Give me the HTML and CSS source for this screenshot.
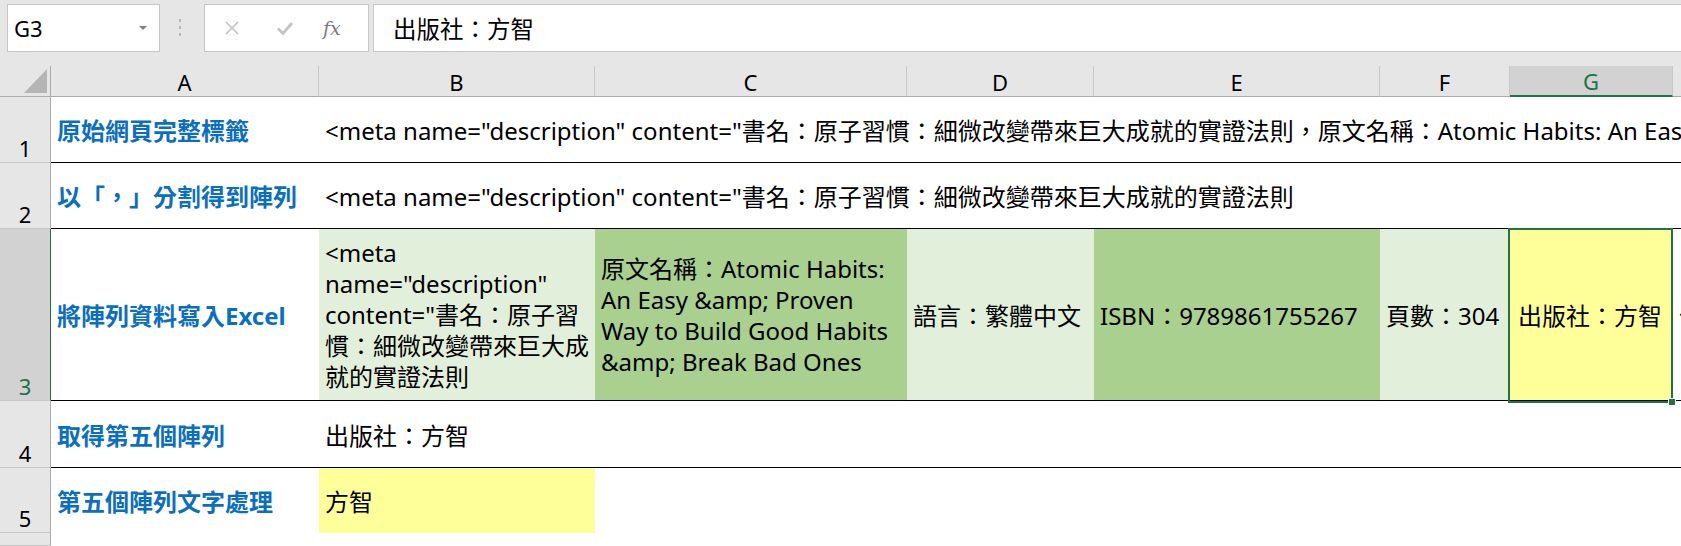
FILE: index.html
```html
<!DOCTYPE html>
<html lang="zh-Hant">
<head>
  <meta charset="UTF-8" />
  <title>Excel - 拆解 meta description</title>
  <link rel="stylesheet" href="styles.css">
</head>
<body>
  <div class="app">
    <div class="formula-bar">
      <div class="name-box">
        <span>G3</span>
        <span class="caret"></span>
      </div>
      <svg class="grip" width="6" height="20" viewBox="0 0 6 20">
        <rect x="2" y="1" width="2" height="3" fill="#b8b8b8"/>
        <rect x="2" y="8" width="2" height="3" fill="#b8b8b8"/>
        <rect x="2" y="15" width="2" height="3" fill="#b8b8b8"/>
      </svg>
      <div class="fx-buttons">
        <svg width="18" height="18" viewBox="0 0 18 18">
          <path d="M3 3 L15 15 M15 3 L3 15" stroke="#c4c4c4" stroke-width="1.6" fill="none"/>
        </svg>
        <svg width="20" height="18" viewBox="0 0 20 18">
          <path d="M3 9.5 L8 14.5 L17 4" stroke="#c4c4c4" stroke-width="2.8" fill="none"/>
        </svg>
        <span class="fx">fx</span>
      </div>
      <div class="formula-input">出版社：方智</div>
    </div>

    <div class="sheet">
      <!-- column headers -->
      <div class="corner">
        <svg width="50" height="30" viewBox="0 0 50 30">
          <polygon points="47,3 47,27 24,27" fill="#b5b5b5"/>
        </svg>
      </div>
      <div class="col-head">A</div>
      <div class="col-head">B</div>
      <div class="col-head">C</div>
      <div class="col-head">D</div>
      <div class="col-head">E</div>
      <div class="col-head">F</div>
      <div class="col-head active">G</div>
      <div class="col-head last"></div>

      <!-- row 1 -->
      <div class="row-head">1</div>
      <div class="cell label line">原始網頁完整標籤</div>
      <div class="cell spill line">&lt;meta name="description" content="書名：原子習慣：細微改變帶來巨大成就的實證法則，原文名稱：Atomic Habits: An Easy &amp;amp; Proven Way to Build Good Habits &amp;amp; Break Bad Ones</div>

      <!-- row 2 -->
      <div class="row-head">2</div>
      <div class="cell label line">以「，」分割得到陣列</div>
      <div class="cell spill line">&lt;meta name="description" content="書名：原子習慣：細微改變帶來巨大成就的實證法則</div>

      <!-- row 3 -->
      <div class="row-head active">3</div>
      <div class="cell label line">將陣列資料寫入Excel</div>
      <div class="cell wrap light line">&lt;meta<br>name="description"<br>content="書名：原子習<br>慣：細微改變帶來巨大成<br>就的實證法則</div>
      <div class="cell wrap dark line">原文名稱：Atomic Habits:<br>An Easy &amp;amp; Proven<br>Way to Build Good Habits<br>&amp;amp; Break Bad Ones</div>
      <div class="cell light line">語言：繁體中文</div>
      <div class="cell dark line">ISBN：9789861755267</div>
      <div class="cell light line">頁數：304</div>
      <div class="cell yellow line">出版社：方智</div>
      <div class="cell line">作者：詹姆斯‧克利爾</div>

      <!-- row 4 -->
      <div class="row-head">4</div>
      <div class="cell label line">取得第五個陣列</div>
      <div class="cell line">出版社：方智</div>
      <div class="cell fill line"></div>

      <!-- row 5 -->
      <div class="row-head">5</div>
      <div class="cell label">第五個陣列文字處理</div>
      <div class="cell yellow">方智</div>
      <div class="cell fill"></div>

      <!-- row 6 -->
      <div class="row-head"></div>
      <div class="cell fill-all"></div>

      <div class="selection"><span class="handle"></span></div>
    </div>
  </div>
</body>
</html>
```

FILE: styles.css
```css
body {
  margin: 0;
  background: #fff;
  font-family: "Noto Sans", "Noto Sans CJK TC", sans-serif;
  color: #000;
  overflow: hidden;
}
.app {
  width: 1681px;
  height: 546px;
  overflow: hidden;
}

/* formula bar */
.formula-bar {
  height: 66px;
  background: #e6e6e6;
  display: flex;
  align-items: flex-start;
  padding-top: 4px;
  box-sizing: border-box;
}
.name-box {
  margin-left: 7px;
  width: 153px;
  height: 48px;
  background: #fff;
  border: 1px solid #c6c6c6;
  box-sizing: border-box;
  display: flex;
  align-items: center;
  justify-content: space-between;
  padding: 0 12px 0 6px;
  font-size: 22px;
}
.caret {
  width: 0;
  height: 0;
  border-left: 4px solid transparent;
  border-right: 4px solid transparent;
  border-top: 4px solid #808080;
}
.grip {
  margin: 14px 21px 0 17px;
}
.fx-buttons {
  width: 165px;
  height: 48px;
  background: #fff;
  border: 1px solid #c6c6c6;
  box-sizing: border-box;
  display: flex;
  align-items: center;
  padding-left: 18px;
  gap: 34px;
}
.fx {
  font-family: "DejaVu Serif", "Liberation Serif", serif;
  font-style: italic;
  font-size: 19px;
  color: #7a7a7a;
  margin-left: -6px;
}
.formula-input {
  margin-left: 4px;
  flex: 1;
  height: 48px;
  background: #fff;
  border: 1px solid #c6c6c6;
  border-right: none;
  box-sizing: border-box;
  display: flex;
  align-items: center;
  padding-left: 19px;
  font-size: 23.5px;
}

/* grid */
.sheet {
  position: relative;
  display: grid;
  grid-template-columns: 51px 268px 276px 312px 187px 286px 130px 163px 1fr;
  grid-template-rows: 31px 66px 66px 172px 67px 65px 1fr;
  height: 480px;
}
.corner, .col-head {
  background: #e6e6e6;
  border-bottom: 1px solid #ababab;
  box-sizing: border-box;
}
.corner {
  border-right: 1px solid #ababab;
}
.col-head {
  border-right: 1px solid #c8c8c8;
  display: flex;
  align-items: center;
  justify-content: center;
  font-size: 22px;
  padding-top: 1px;
}
.col-head.last {
  border-right: none;
}
.col-head.active {
  background: #d2d2d2;
  color: #217346;
  border-bottom: 2px solid #217346;
}
.row-head {
  grid-column: 1;
  background: #e6e6e6;
  border-right: 1px solid #ababab;
  border-bottom: 1px solid #c8c8c8;
  box-sizing: border-box;
  display: flex;
  align-items: flex-end;
  justify-content: center;
  font-size: 22px;
  line-height: 1;
  padding-bottom: 3px;
}
.row-head.active {
  background: #d2d2d2;
  color: #217346;
  border-right-color: #217346;
}

.cell {
  box-sizing: border-box;
  display: flex;
  align-items: center;
  padding: 0 6px;
  font-size: 24px;
  white-space: nowrap;
  overflow: hidden;
}
.cell.line {
  border-bottom: 1px solid #000;
}
.cell.label {
  color: #0a6fc2;
  font-weight: bold;
}
.cell.spill {
  grid-column: 3 / -1;
}
.cell.fill {
  grid-column: 4 / -1;
}
.cell.fill-all {
  grid-column: 2 / -1;
}
.cell.wrap {
  line-height: 31px;
}
.cell.light {
  background: #e2efda;
}
.cell.dark {
  background: #a9d08e;
}
.cell.yellow {
  background: #ffff99;
}
.cell.yellow.line {
  padding-left: 8px;
}

/* active cell outline on G3 */
.selection {
  position: absolute;
  left: 1508px;
  top: 162px;
  width: 165px;
  height: 175px;
  border: 2px solid #217346;
  box-sizing: border-box;
}
.handle {
  position: absolute;
  right: -5px;
  bottom: -5px;
  width: 6px;
  height: 6px;
  background: #217346;
  border: 1px solid #fff;
}
```
